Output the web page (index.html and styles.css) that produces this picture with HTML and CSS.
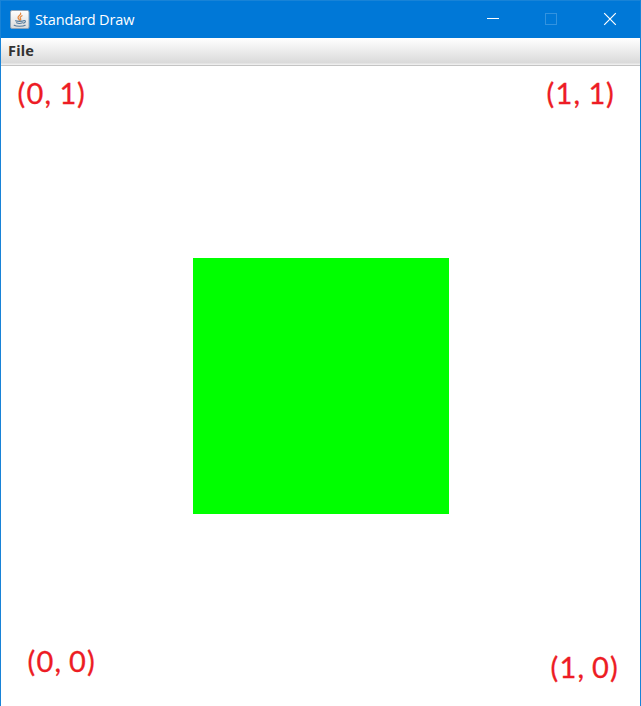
FILE: index.html
```html
<!DOCTYPE html>
<html lang="en">
<head>
<meta charset="utf-8">
<title>Standard Draw</title>
<link rel="stylesheet" href="styles.css">
</head>
<body>
<div class="window">
  <header class="titlebar">
    <svg class="app-icon" width="20" height="20" viewBox="0 0 20 20">
      <defs><linearGradient id="tile" x2="0" y2="1"><stop offset="0" stop-color="#fff"/><stop offset="1" stop-color="#d9d9d9"/></linearGradient></defs>
      <rect x=".5" y=".5" width="18.5" height="18" rx="1.5" fill="url(#tile)" stroke="#8ba3b8"/>
      <g fill="none" stroke-linecap="round">
        <path d="M10.6 3.2c1 2-3.4 2.800-2.500 4.800.3.800 1 1.200 1.200 2M12 5.800c-2 1.100-2.300 1.800-1.400 2.900.5.700 0 1.100-.5 1.500" stroke="#e58a42" stroke-width="1.300"/>
        <path d="M5.500 10.800c1.500.7 6.500.7 8.200 0M6.500 12.800c1.500.7 4.500.6 6 0M4.200 15.300c2 1.400 9 1.300 11 0M13.800 10.600c2.200-.6 2.200 1.800-.2 2.500" stroke="#557b9c" stroke-width="1.100"/>
      </g>
    </svg>
    <h1 class="title">Standard Draw</h1>
    <div class="controls">
      <svg class="control" width="58" height="37" viewBox="0 0 58 37"><path d="M22 17.500h12" stroke="#fff"/></svg>
      <svg class="control" width="58" height="37" viewBox="0 0 58 37"><rect x="22.500" y="12.500" width="11" height="11" fill="none" stroke="#3393df"/></svg>
      <svg class="control" width="58" height="37" viewBox="0 0 58 37"><path d="M23.200 12.200l11.600 11.600M34.800 12.200L23.200 23.800" stroke="#fff" stroke-width="1.200"/></svg>
    </div>
  </header>
  <nav class="menubar"><span class="menu">File</span></nav>
  <svg class="canvas" width="639" height="640" viewBox="1 66 639 640">
    <rect x="193" y="258" width="256" height="256" fill="#0f0"/>
    <g class="coords">
      <text x="17.500 26.500 44.500 53 59.500 77" y="104">(0, 1)</text>
      <text x="546.500 555.500 573.500 582 588.500 606" y="104">(1, 1)</text>
      <text x="27.500 36.500 54.500 63 69 87" y="672">(0, 0)</text>
      <text x="550.500 559.500 577.500 586 592 610" y="678">(1, 0)</text>
    </g>
  </svg>
</div>
</body>
</html>
```
FILE: styles.css
```css
* { box-sizing: border-box; }

body {
  margin: 0;
  background: #fff;
}

.window {
  width: 641px;
  height: 706px;
  overflow: hidden;
  border: 1px solid #1883d7;
  border-bottom: 0;
  display: flex;
  flex-direction: column;
}

.titlebar {
  height: 37px;
  flex: none;
  display: flex;
  align-items: center;
  padding: 0 1px 0 9px;
  background: #0078d7;
  color: #fff;
}

.app-icon { flex: none; }

.title {
  margin: 0 0 0 5px;
  font: 400 14.5px/20px "Open Sans", "Noto Sans", sans-serif;
  letter-spacing: -0.16px;
}

.controls {
  display: flex;
  margin-left: auto;
}

.menubar {
  height: 28px;
  flex: none;
  display: flex;
  align-items: flex-start;
  padding-left: 7px;
  background: linear-gradient(#fff, #dadada 25px, #eee 26px);
  border-bottom: 1px solid #c4c4c4;
}

.menu {
  font: 700 14.5px/25px "Noto Sans", sans-serif;
  letter-spacing: 0.2px;
  color: #333;
}

.canvas {
  display: block;
  flex: none;
}

.coords {
  font: 400 29px Lato, sans-serif;
  fill: #ed1c24;
  stroke: #ed1c24;
  stroke-width: 0.3px;
}
```
